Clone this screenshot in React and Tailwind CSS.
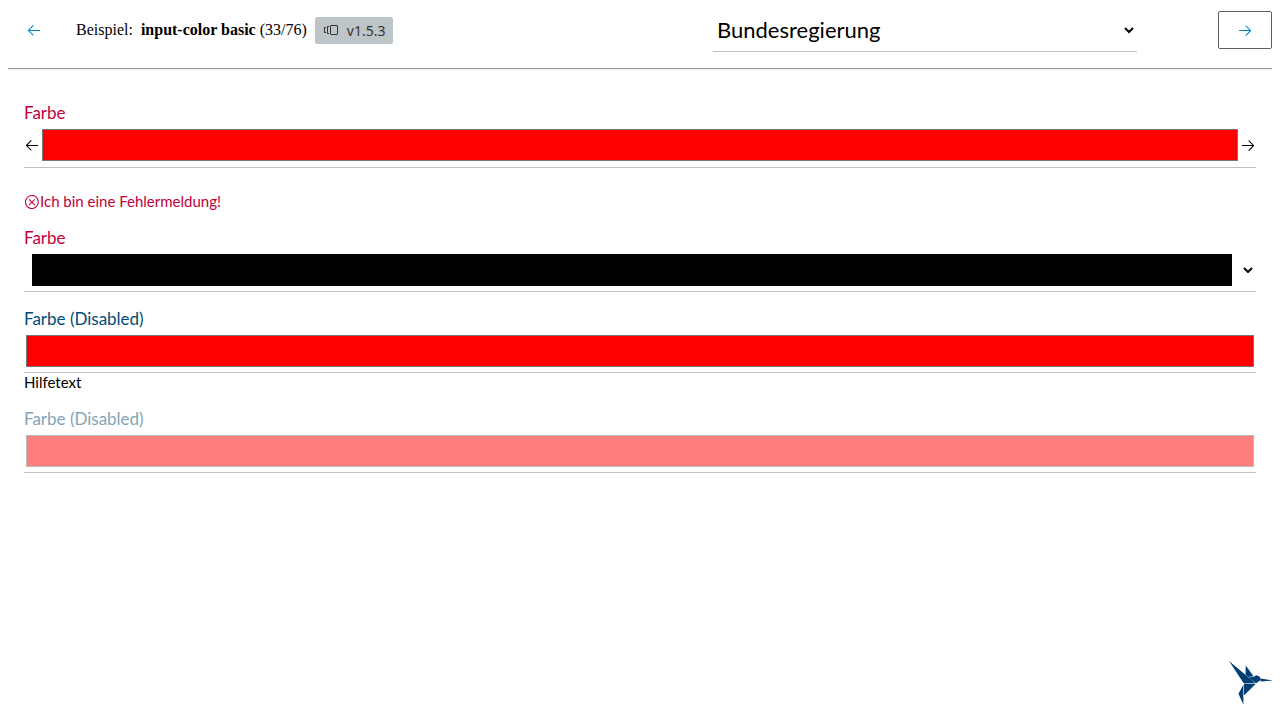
import React, { useState } from "react";
import { VscArrowLeft, VscArrowRight, VscError, VscVersions } from "react-icons/vsc";

const swatch =
  "block h-[42px] w-full min-w-0 flex-1 cursor-pointer appearance-none border-0 bg-transparent px-[2px] py-[5px] disabled:cursor-default [&::-webkit-color-swatch-wrapper]:p-0 [&::-webkit-color-swatch]:rounded-none [&::-webkit-color-swatch]:border [&::-webkit-color-swatch]:border-[#777777]";

const plainSwatch =
  "block h-[42px] w-full min-w-0 flex-1 cursor-pointer appearance-none border-0 bg-transparent py-[5px] pl-2 [&::-webkit-color-swatch-wrapper]:p-0 [&::-webkit-color-swatch]:rounded-none [&::-webkit-color-swatch]:border-0";

function Label({ htmlFor, className, children }) {
  return (
    <label htmlFor={htmlFor} className={"block text-[17px] leading-[22px] " + className}>
      {children}
    </label>
  );
}

function Bird() {
  return (
    <svg viewBox="0 0 64 64" className="size-16" role="img" aria-label="KoliBri">
      <g fill="#003e73">
        <path d="M13 11 L31.500 26.500 L39 33 L27.500 33 Z" />
        <path d="M29.800 15.500 L37.500 26.200 L32 27 L29.500 24.500 Z" />
        <path d="M32.300 27.600 L37.500 26.800 L40.500 25.300 L43.500 26.500 L45 30 L40 33.200 Z" />
        <path d="M28 33.600 L39.800 33.800 L28 45 Z" />
        <path d="M27.400 34.500 L27.400 54.800 L22.500 43.800 Z" />
        <path d="M28 45.300 L39.500 34.500 L28.200 44 Z" />
        <path d="M44.500 28.500 L57 30.500 L44.800 31.500 Z" />
      </g>
    </svg>
  );
}

export default function App() {
  const [first, setFirst] = useState("#ff0000");
  const [second, setSecond] = useState("#000000");
  const [third, setThird] = useState("#ff0000");

  return (
    <div className="flex min-h-screen flex-col bg-white px-2 font-['Lato',sans-serif] text-black">
      <header className="flex items-center pt-2 pb-4">
        <button
          type="button"
          aria-label="Vorheriges Beispiel"
          className="flex h-[38px] w-[52px] items-center justify-center text-[#0080c9]"
        >
          <VscArrowLeft className="size-4" />
        </button>
        <div className="ml-4 flex items-center gap-2 font-['Liberation_Serif',serif] text-base whitespace-nowrap">
          <span>Beispiel:</span>
          <span>
            <strong>input-color basic</strong> (33/76)
          </span>
          <span className="flex h-[27px] items-center gap-2 rounded-[2px] bg-[#bec5c9] px-2 font-['Noto_Sans',sans-serif] text-[14px] text-[#333333]">
            <VscVersions className="size-4" />
            v1.5.3
          </span>
        </div>
        <select
          aria-label="Theme"
          className="mr-[81px] ml-auto h-11 w-[424px] min-w-0 border-b border-[#c0c0c0] bg-transparent text-[22px]"
          defaultValue="Bundesregierung"
        >
          <option>Bundesregierung</option>
        </select>
        <button
          type="button"
          aria-label="Nächstes Beispiel"
          className="flex h-[38px] w-[54px] items-center justify-center rounded-[2px] border border-[#576164] text-[#0080c9]"
        >
          <VscArrowRight className="size-4" />
        </button>
      </header>
      <hr className="h-0.5 border-t border-b border-t-[#9a9a9a] border-b-[#eeeeee]" />

      <main className="flex flex-col gap-4 px-4 pt-8">
        <div>
          <Label htmlFor="color-1" className="text-[#c0003c]">Farbe</Label>
          <div className="flex items-center border-b border-[#bfc1c3] pb-px">
            <VscArrowLeft className="size-4 shrink-0" />
            <input id="color-1" type="color" value={first} onChange={(e) => setFirst(e.target.value)} aria-describedby="color-1-error" className={swatch} />
            <VscArrowRight className="size-4 shrink-0" />
          </div>
          <p id="color-1-error" className="mt-6 flex items-center text-[15px] leading-[19px] text-[#c0003c]">
            <VscError className="size-4" />
            Ich bin eine Fehlermeldung!
          </p>
        </div>

        <div>
          <Label htmlFor="color-2" className="text-[#c0003c]">Farbe</Label>
          <div className="flex items-center border-b border-[#bfc1c3]">
            <input id="color-2" type="color" value={second} onChange={(e) => setSecond(e.target.value)} className={plainSwatch} />
            <span className="flex w-6 shrink-0 justify-end pr-[3px]">
              <svg viewBox="0 0 10 6" className="h-1.5 w-2.5" fill="none" stroke="currentColor" strokeWidth="2" aria-hidden="true">
                <path d="M1 1 L5 5 L9 1" />
              </svg>
            </span>
          </div>
        </div>

        <div>
          <Label htmlFor="color-3" className="text-[#004b76]">Farbe (Disabled)</Label>
          <div className="flex border-b border-[#bec5c9]">
            <input id="color-3" type="color" value={third} onChange={(e) => setThird(e.target.value)} aria-describedby="color-3-hint" className={swatch} />
          </div>
          <p id="color-3-hint" className="text-[15px] leading-[19px]">Hilfetext</p>
        </div>

        <div>
          <Label htmlFor="color-4" className="text-[#004b76] opacity-50">Farbe (Disabled)</Label>
          <div className="flex border-b border-[#bec5c9]">
            <input id="color-4" type="color" defaultValue="#ff0000" disabled className={swatch + " opacity-50"} />
          </div>
        </div>
      </main>

      <div className="fixed right-0 bottom-1.5">
        <Bird />
      </div>
    </div>
  );
}
